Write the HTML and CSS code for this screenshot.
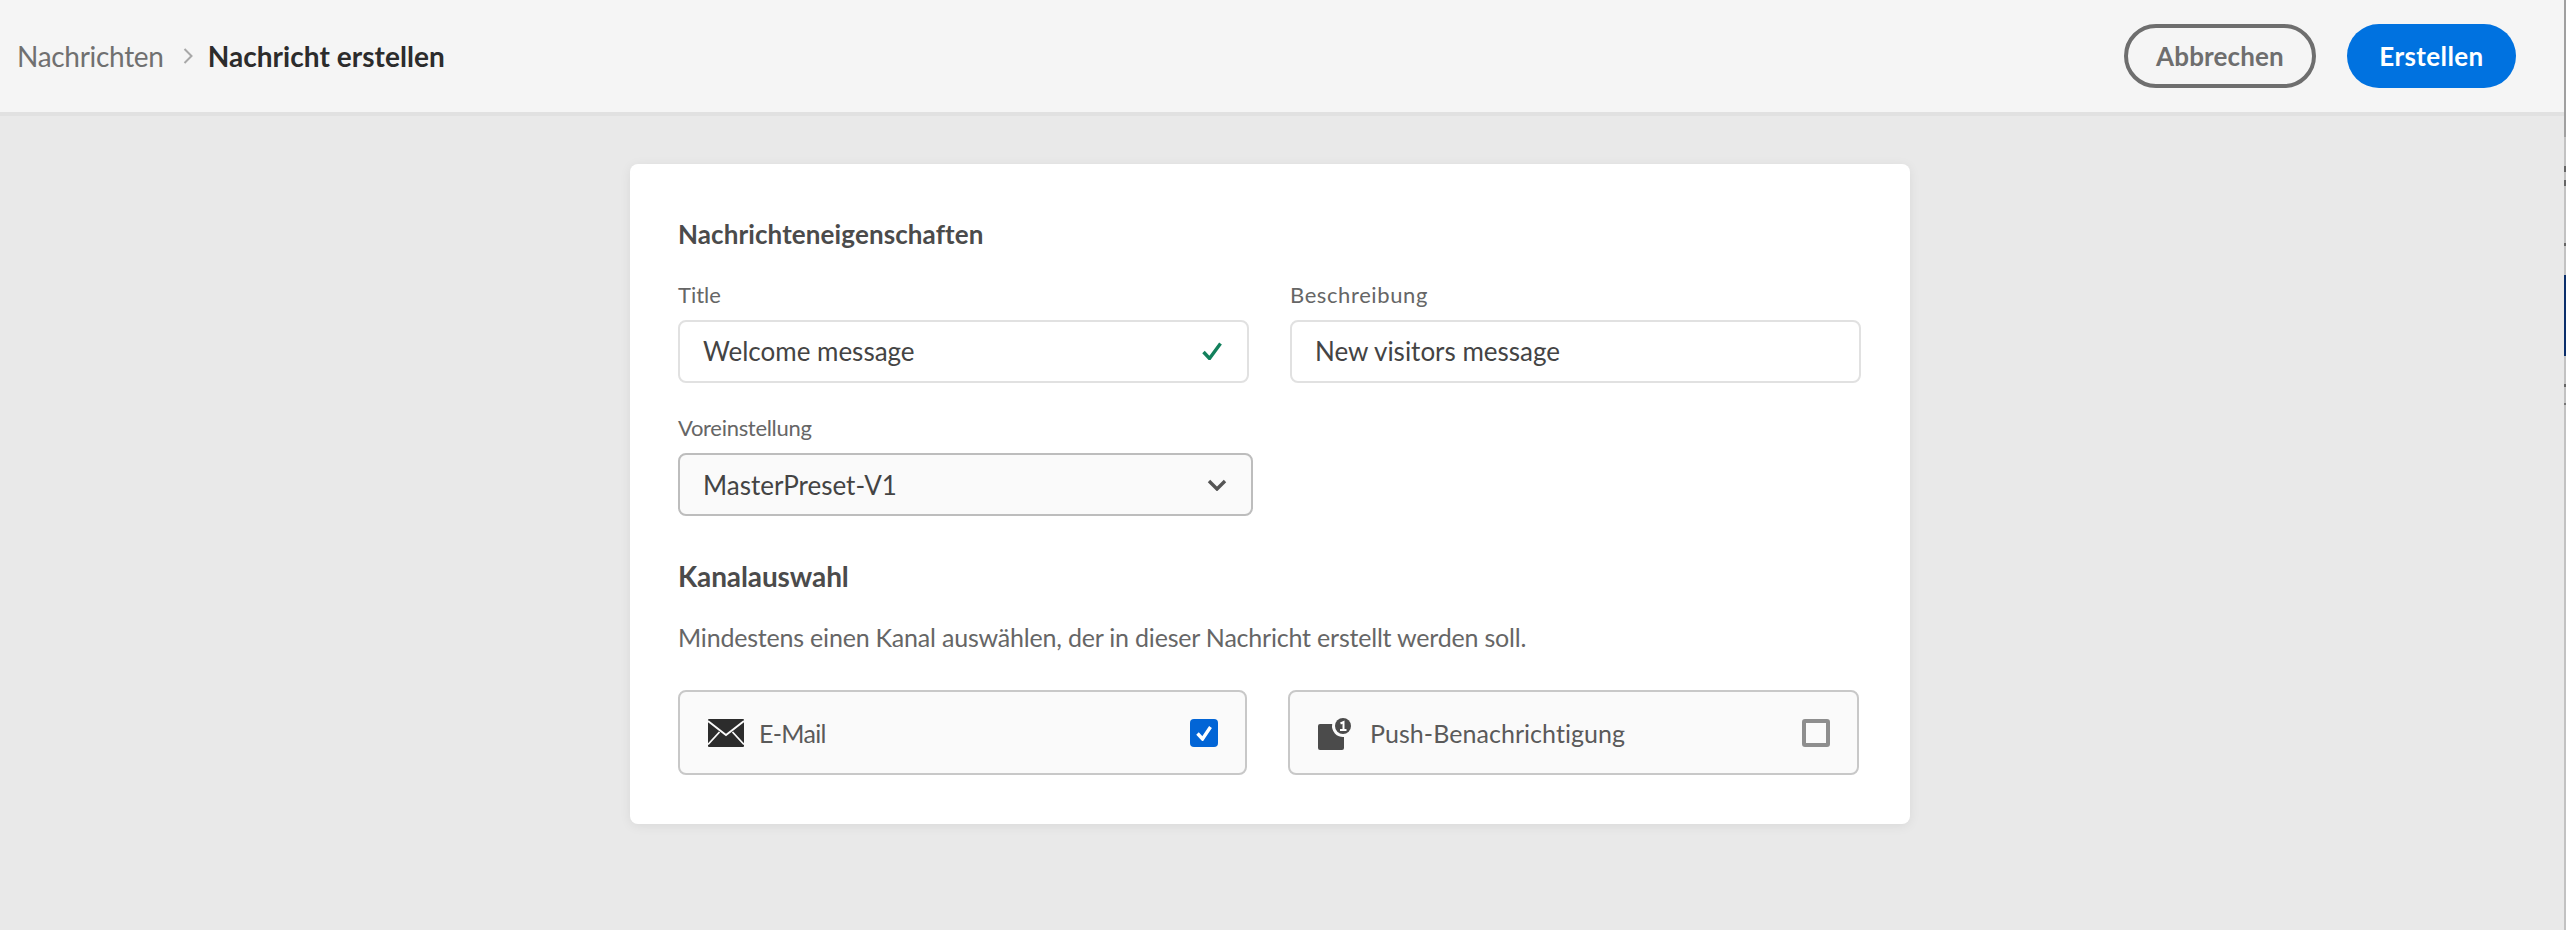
FILE: index.html
```html
<!DOCTYPE html>
<html lang="de">
<head>
<meta charset="utf-8">
<title>Nachricht erstellen</title>
<link rel="stylesheet" href="styles.css">
</head>
<body>
<div class="app">
  <div class="page">
    <header class="topbar">
      <nav class="crumbs">
        <span class="crumb">Nachrichten</span>
        <svg class="crumb-sep" width="10" height="18" viewBox="0 0 10 18"><path d="M1.5 2l7 7-7 7" fill="none" stroke="#a8a8a8" stroke-width="2"/></svg>
        <span class="crumb-current">Nachricht erstellen</span>
      </nav>
      <div class="actions">
        <button class="btn btn-outline">Abbrechen</button>
        <button class="btn btn-primary">Erstellen</button>
      </div>
    </header>
    <main class="content">
      <section class="card">
        <h2 class="section-title">Nachrichteneigenschaften</h2>
        <div class="fields">
          <div class="field">
            <label class="label">Title</label>
            <div class="input">
              <span>Welcome message</span>
              <svg width="20" height="18" viewBox="0 0 20 18"><path d="M1.500 10l6 6.500L18.500 1.500" fill="none" stroke="#12805c" stroke-width="3.400"/></svg>
            </div>
          </div>
          <div class="field">
            <label class="label label-wide">Beschreibung</label>
            <div class="input"><span>New visitors message</span></div>
          </div>
          <div class="field field-select">
            <label class="label label-tight">Voreinstellung</label>
            <div class="select">
              <span>MasterPreset-V1</span>
              <svg width="20" height="12" viewBox="0 0 20 12"><path d="M2 2l8 8 8-8" fill="none" stroke="#555" stroke-width="3.400"/></svg>
            </div>
          </div>
        </div>
        <h2 class="section-title section-channel">Kanalauswahl</h2>
        <p class="hint">Mindestens einen Kanal auswählen, der in dieser Nachricht erstellt werden soll.</p>
        <div class="tiles">
          <div class="tile">
            <svg class="tile-icon" width="36" height="28" viewBox="0 0 36 28">
              <rect width="36" height="28" rx="1" fill="#2c2c2c"/>
              <path d="M0 2l18 14L36 2M0 25.500l11.500-12.500M36 25.500L24.500 13" fill="none" stroke="#fafafa" stroke-width="1.800"/>
            </svg>
            <span class="tile-name">E-Mail</span>
            <span class="check check-on">
              <svg width="18" height="16" viewBox="0 0 18 16"><path d="M2.500 8.500l5 5.500L15.500 2" fill="none" stroke="#fff" stroke-width="3.400"/></svg>
            </span>
          </div>
          <div class="tile">
            <svg class="tile-icon icon-push" width="36" height="32" viewBox="0 0 36 32">
              <path d="M2 6H14.200A11 11 0 0 0 26 19V30a2 2 0 0 1-2 2H2a2 2 0 0 1-2-2V8a2 2 0 0 1 2-2z" fill="#4b4b4b"/>
              <circle cx="25" cy="8" r="8" fill="#4b4b4b"/>
              <path d="M22.500 5.500l3-1.500v8M22 12h6.500" fill="none" stroke="#fff" stroke-width="2"/>
            </svg>
            <span class="tile-name tile-name-long">Push-Benachrichtigung</span>
            <span class="check"></span>
          </div>
        </div>
      </section>
    </main>
  </div>
  <div class="edge"></div>
</div>
</body>
</html>
```
FILE: styles.css
```css
* { box-sizing: border-box; }
html, body { margin: 0; height: 100%; }
body {
  font-family: "Lato", "Open Sans", sans-serif;
  background: #e9e9e9;
  color: #4b4b4b;
  overflow: hidden;
}
.app { display: flex; height: 930px; }
.page { flex: 1; min-width: 0; display: flex; flex-direction: column; }
.edge {
  width: 2px;
  background: linear-gradient(to bottom,
    #a0a0a0 0 137px,
    #c2c2c2 137px 166px,
    #666 166px 172px,
    #c2c2c2 172px 180px,
    #666 180px 186px,
    #c2c2c2 186px 243px,
    #666 243px 246px,
    #c2c2c2 246px 275px,
    #0b2f6b 275px 356px,
    #c2c2c2 356px 384px,
    #666 384px 387px,
    #c2c2c2 387px 403px,
    #777 403px 405px,
    #c2c2c2 405px);
}

.topbar {
  height: 116px;
  flex: none;
  background: #f5f5f5;
  border-bottom: 4px solid #e1e1e1;
  display: flex;
  align-items: center;
  justify-content: space-between;
  padding: 0 48px 0 17px;
}
.crumbs { display: flex; align-items: center; }
.crumb { font-size: 28px; letter-spacing: -.3px; color: #707070; }
.crumb-sep { margin: 0 15px 0 19px; }
.crumb-current { font-size: 28px; font-weight: 700; letter-spacing: .05px; color: #2c2c2c; }
.actions { display: flex; gap: 31px; }
.btn {
  font-family: inherit;
  font-size: 26px;
  font-weight: 700;
  height: 64px;
  border-radius: 32px;
  padding: 0;
}
.btn-outline { width: 192px; background: transparent; border: 4px solid #6e6e6e; color: #6e6e6e; letter-spacing: .15px; }
.btn-primary { width: 169px; background: #0072e0; border: none; color: #fff; letter-spacing: .4px; }

.content { flex: 1; padding: 48px 0 0 630px; }
.card {
  width: 1280px;
  height: 660px;
  background: #fff;
  border-radius: 8px;
  box-shadow: 0 2px 12px rgba(0,0,0,.07);
  padding: 53px 48px 0;
}
.section-title { margin: 0; font-size: 26px; line-height: 34px; font-weight: 700; letter-spacing: .1px; color: #4b4b4b; }
.fields {
  display: grid;
  grid-template-columns: 571px 571px;
  column-gap: 41px;
  margin-top: 29px;
}
.field-select { grid-column: 1; margin-top: 30px; width: 575px; }
.label { display: block; font-size: 22px; line-height: 30px; color: #666; margin-bottom: 10px; }
.label-wide { letter-spacing: .6px; }
.label-tight { letter-spacing: -.3px; }
.input, .select {
  height: 63px;
  border-radius: 8px;
  display: flex;
  align-items: center;
  justify-content: space-between;
  font-size: 26px;
  color: #444;
}
.input { background: #fff; border: 2px solid #e1e1e1; padding: 0 25px 2px 23px; }
.select { background: #fafafa; border: 2px solid #bdbdbd; padding: 0 24px 0 23px; }
.section-channel { margin-top: 43px; font-size: 28px; letter-spacing: -.1px; }
.hint { margin: 27px 0 0; font-size: 25px; line-height: 34px; letter-spacing: -.2px; color: #666; }
.tiles { display: grid; grid-template-columns: 569px 571px; column-gap: 41px; margin-top: 36px; }
.tile {
  height: 85px;
  background: #fafafa;
  border: 2px solid #c8c8c8;
  border-radius: 8px;
  display: flex;
  align-items: center;
  padding: 0 27px 0 28px;
}
.tile-icon { flex: none; }
.icon-push { margin-top: 2px; }
.tile-name { flex: 1; margin-left: 15px; font-size: 25px; letter-spacing: -.7px; color: #5a5a5a; }
.tile-name-long { margin-left: 16px; letter-spacing: .05px; }
.check {
  width: 28px;
  height: 28px;
  flex: none;
  border: 4px solid #8e8e8e;
  border-radius: 3px;
}
.check-on {
  background: #0265d6;
  border: none;
  border-radius: 4px;
  display: flex;
  align-items: center;
  justify-content: center;
}
```
